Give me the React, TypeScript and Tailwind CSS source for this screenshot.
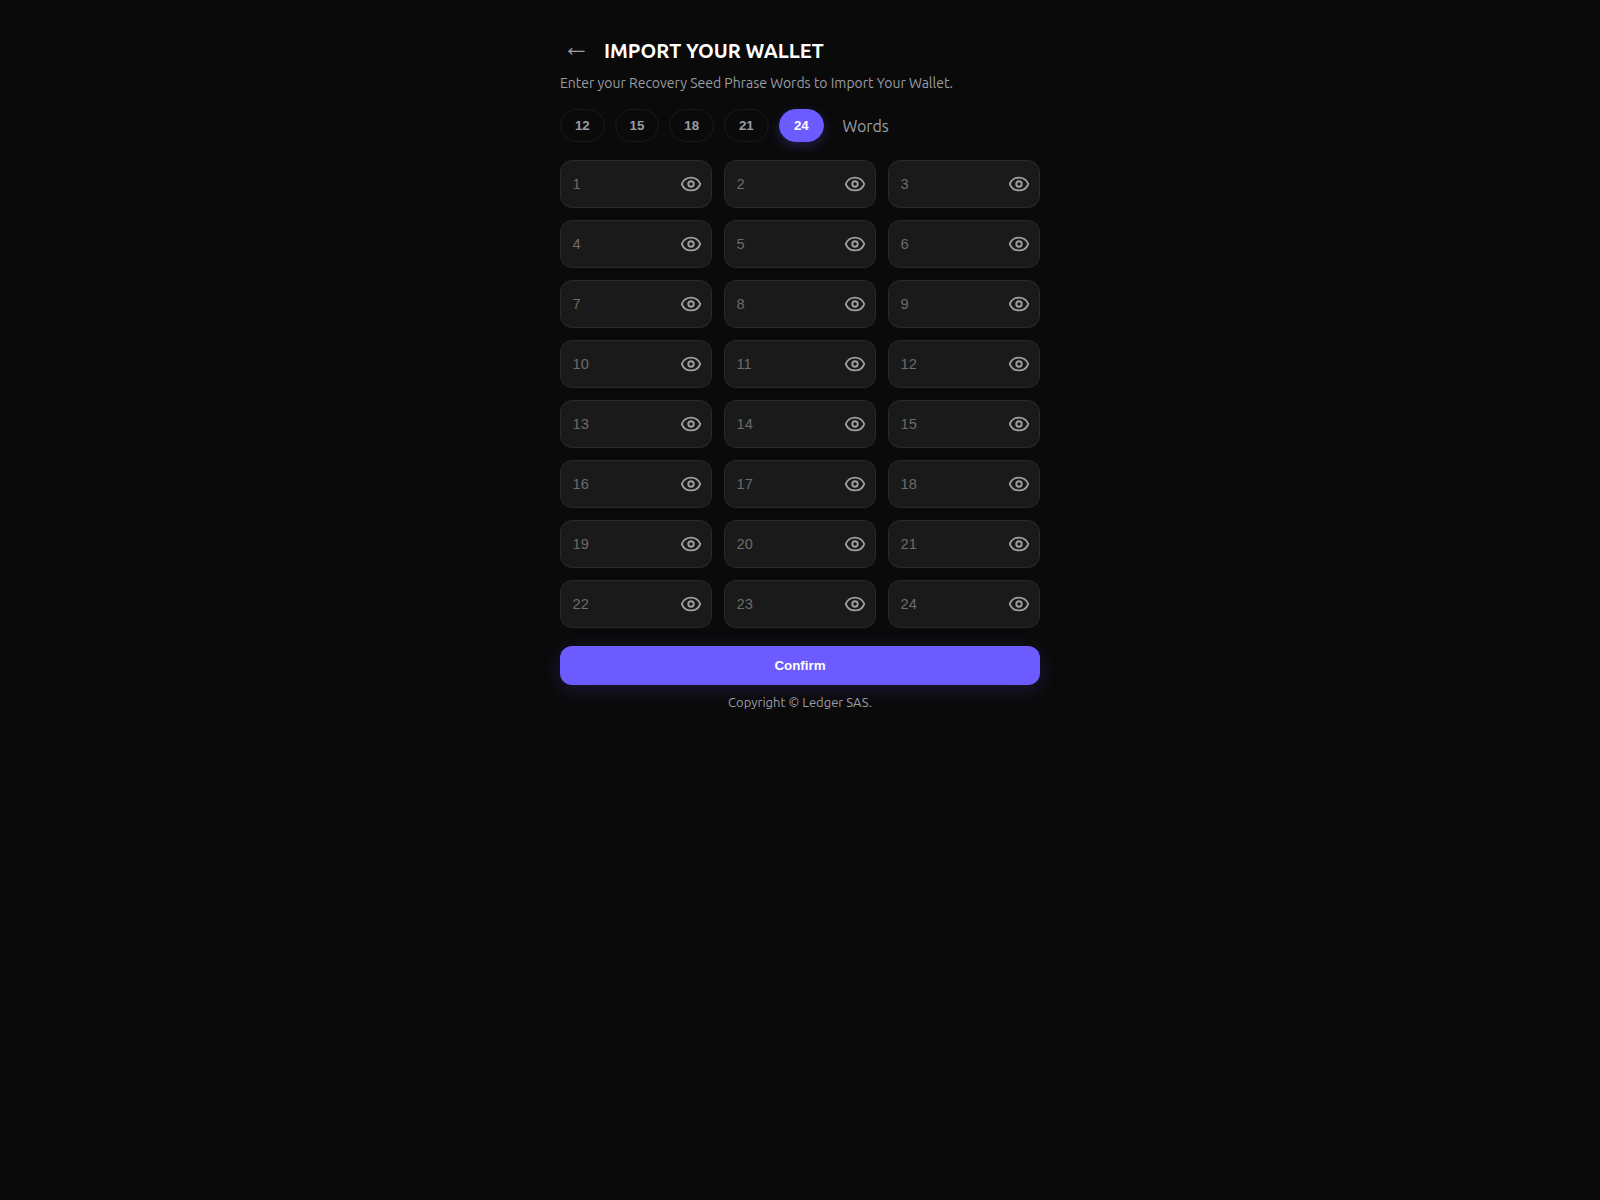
import { Eye } from 'lucide-react';

const WORD_COUNTS = [12, 15, 18, 21, 24];
const SELECTED = 24;
const UI_FONT = "font-['Ubuntu','Noto_Sans',sans-serif]";

export default function App() {
  const fields = Array.from({ length: SELECTED }, (_, i) => i + 1);

  return (
    <div className={`min-h-[1200px] bg-[#0a0a0a] ${UI_FONT}`}>
      <div className="mx-auto flex w-[480px] flex-col pt-[36px]">
        {/* Header */}
        <div className="flex h-[30px] items-center">
          <button className="ml-[2px] flex h-[30px] w-[42px] items-center pb-[8px] font-['Liberation_Sans',sans-serif] text-[28px] leading-none text-[#9a9da3]">
            ←
          </button>
          <h1 className="text-[20px] leading-[30px] font-bold text-white">IMPORT YOUR WALLET</h1>
        </div>
        <p className="mt-[7px] text-[14px] leading-[20px] text-[#9a9da3]">
          Enter your Recovery Seed Phrase Words to Import Your Wallet.
        </p>

        {/* Word count pills */}
        <div className="mt-[16px] flex items-center gap-[10px]">
          {WORD_COUNTS.map((count) => (
            <button
              key={count}
              className={`h-[33px] rounded-full border font-['Liberation_Sans',sans-serif] text-[13.33px] font-bold ${
                count === SELECTED
                  ? 'w-[45.33px] border-[#6c5cff] bg-[#6c5cff] text-white shadow-[0_4px_12px_rgba(108,92,255,0.25)]'
                  : 'w-[44.67px] border-[#1a1a1a] bg-[#0a0a0a] text-[#9a9da3]'
              }`}
            >
              {count}
            </button>
          ))}
          <span className="ml-[8.5px] text-[16px] text-[#9a9da3]">Words</span>
        </div>

        {/* Seed phrase inputs */}
        <div className="mt-[18px] grid grid-cols-3 gap-x-[12px] gap-y-[12px]">
          {fields.map((n) => (
            <div
              key={n}
              className="flex h-[48px] items-center rounded-[12px] border border-[#2a2a2a] bg-[#1a1a1a] pr-[9px] pl-[11.5px]"
            >
              <input
                type="password"
                placeholder={String(n)}
                className="w-0 flex-1 bg-transparent font-['Liberation_Sans',sans-serif] text-[14.67px] leading-[22px] text-white outline-none placeholder:text-[#6b6b6b]"
              />
              <Eye size={22} strokeWidth={2} className="text-[#a0a0a0]" />
            </div>
          ))}
        </div>

        {/* Confirm */}
        <button className="mt-[18px] h-[39px] rounded-[12px] bg-[#6c5cff] font-['Liberation_Sans',sans-serif] text-[13.33px] font-bold text-white shadow-[0_4px_20px_rgba(108,92,255,0.2)]">
          Confirm
        </button>
        <p className="mt-[8px] text-center text-[13px] leading-[19px] text-[#9a9da3]">Copyright © Ledger SAS.</p>
      </div>
    </div>
  );
}
